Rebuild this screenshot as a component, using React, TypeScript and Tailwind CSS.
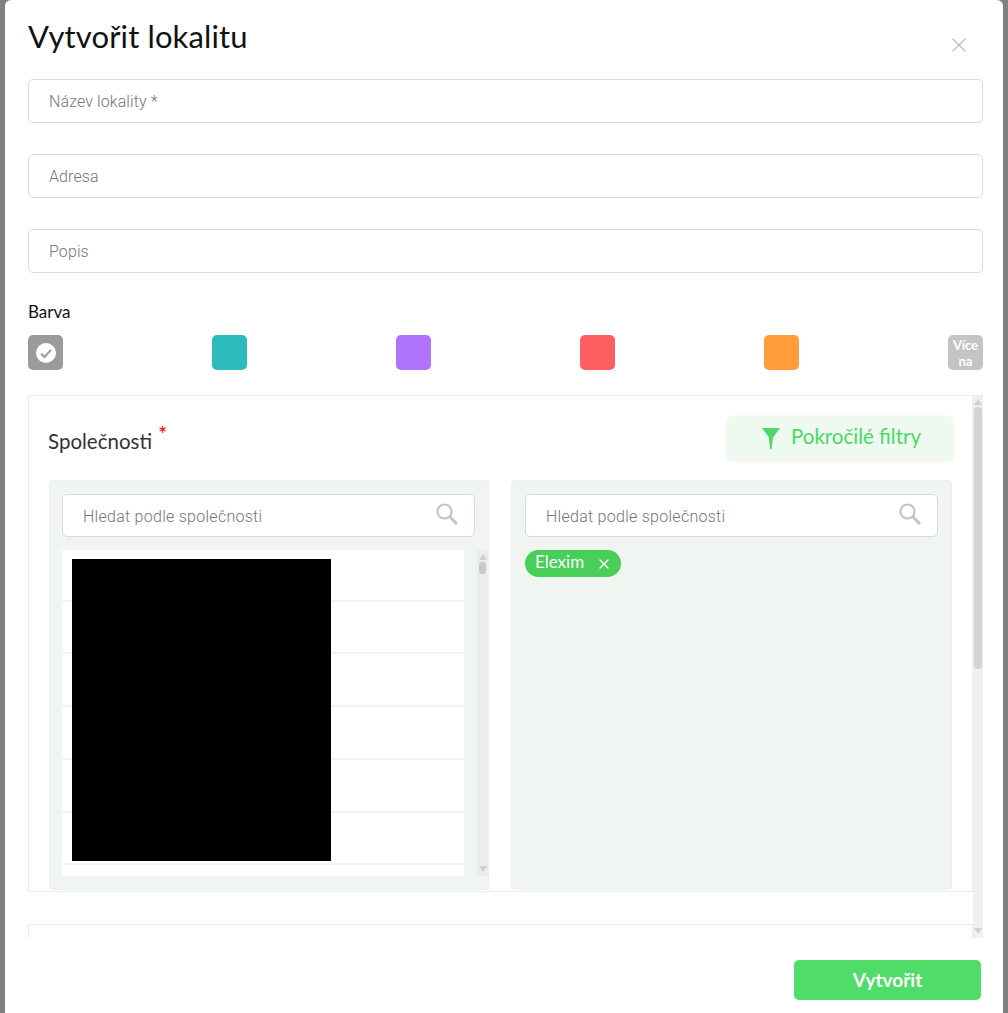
import React from "react";
import { X } from "lucide-react";

const display = "font-['Lato','Liberation_Sans',sans-serif]";
const body = "font-['Roboto','Liberation_Sans',sans-serif]";

function Field({ label }: { label: string }) {
  return (
    <div className={`h-[44px] w-full border border-[#dcdcdc] rounded-[5px] pl-5 pt-[1px] flex items-center text-[16px] tracking-[0.1px] font-light text-[#757575] ${body}`}>
      {label}
    </div>
  );
}

function SearchBox() {
  return (
    <div className={`h-[43px] bg-white border border-[#d5dcd7] rounded-[5px] pl-5 pr-[16px] pt-[2px] flex items-center justify-between text-[16px] tracking-[0.27px] font-light text-[#757575] ${body}`}>
      <span>Hledat podle společnosti</span>
      <svg width="22" height="22" viewBox="0 0 22 22" fill="none" stroke="#c4c4c4" className="-mt-[5px]">
        <circle cx="8.5" cy="8.5" r="7" strokeWidth="2.2" />
        <path d="M13.5 13.5L21 21" strokeWidth="3" />
      </svg>
    </div>
  );
}

function Arrow({ down }: { down?: boolean }) {
  return (
    <svg width="8" height="6" viewBox="0 0 8 6" className="shrink-0">
      <path d={down ? "M0 0H8L4 6Z" : "M4 0L8 6H0Z"} fill="#d0d0d0" />
    </svg>
  );
}

export default function App() {
  const swatches = ["bg-[#9b9b9b]", "bg-[#2cbcbc]", "bg-[#b074fc]", "bg-[#fd5f62]", "bg-[#ff9c3c]"];
  const rows = [50, 50, 51, 51, 51, 50, 11];

  return (
    <div className="h-[1013px] w-[1008px] overflow-hidden bg-[#808080] px-[5px]">
      <div className="h-full bg-white rounded-t-[6px] pl-[23px] pr-[20px]">
        <div className="flex justify-between pt-[18px] h-[79px]">
          <h1 className={`text-[31px] tracking-[0.13px] leading-[36px] text-[#111] ${display}`}>Vytvořit lokalitu</h1>
          <X className="w-[24px] h-[24px] mt-[15px] mr-[12px] text-[#bdbdbd]" strokeWidth={1.3} />
        </div>

        <div className="flex flex-col gap-[31px]">
          <Field label="Název lokality *" />
          <Field label="Adresa" />
          <Field label="Popis" />
        </div>

        <div className={`mt-[29px] text-[17px] leading-[20px] text-[#111] ${display}`}>Barva</div>
        <div className="mt-[13px] flex justify-between">
          {swatches.map((c, i) => (
            <div key={c} className={`w-[35px] h-[35px] rounded-[5px] flex items-center justify-center ${c}`}>
              {i === 0 && (
                <svg width="20" height="20" viewBox="0 0 20 20">
                  <circle cx="10" cy="10" r="10" fill="#fff" />
                  <path d="M5 10.5L8.5 14L15 6.8" fill="none" stroke="#9b9b9b" strokeWidth="2" />
                </svg>
              )}
            </div>
          ))}
          <div className={`w-[35px] h-[35px] rounded-[5px] bg-[#c4c4c4] text-white text-[13px] font-bold leading-[16px] text-center pt-[2px] ${display}`}>
            Více<br />na
          </div>
        </div>

        <div className="mt-[25px] h-[543px] flex overflow-hidden">
          <div className="w-[945px] shrink-0">
            <div className="h-[497px] border border-[#ececec] pt-[20px] pl-[20px] pr-[19px]">
              <div className="flex justify-between items-start h-[44px]">
                <div className={`mt-[8px] -ml-[1px] text-[20.5px] leading-[34px] text-[#333] flex ${display}`}>
                  Společnosti
                  <span className="text-[#f00] text-[22px] leading-[22px] ml-[6px] -mt-[1px]">*</span>
                </div>
                <button className={`w-[226px] h-[44px] bg-[#eefaf0] rounded-[5px] pb-[4px] shadow-[0_1px_4px_rgba(0,0,0,0.07)] flex items-center pl-[35px] gap-[11px] text-[#4bd866] text-[20.5px] ${display}`}>
                  <svg width="18" height="21" viewBox="0 0 18 21" className="mt-[4px]">
                    <path d="M0 0H18L11 9.5L9.5 21H8L7 9.5Z" fill="#4bd866" />
                  </svg>
                  Pokročilé filtry
                </button>
              </div>

              <div className="mt-[20px] flex gap-[22px] h-[410px]">
                <div className="w-[440px] bg-[#f0f5f1] border border-[#ebf0ec] rounded-l-[4px] pt-[13px] pl-[12px] flex flex-col">
                  <div className="w-[413px]"><SearchBox /></div>
                  <div className="mt-[13px] flex gap-[13px] h-[326px]">
                    <div className="w-[403px] relative flex flex-col gap-[2px] overflow-hidden">
                      {rows.map((h, i) => (
                        <div key={i} className="bg-white shrink-0" style={{ height: h }} />
                      ))}
                      <div className="absolute left-[10px] top-[9px] w-[259px] h-[302px] bg-black" />
                    </div>
                    <div className="w-[11px] bg-[#ececec] flex flex-col items-center py-[4px]">
                      <Arrow />
                      <div className="w-[7px] h-[12px] mt-[2px] rounded-[4px] bg-[#c8c8c8]" />
                      <div className="flex-1" />
                      <Arrow down />
                    </div>
                  </div>
                </div>
                <div className="w-[441px] bg-[#f0f5f1] border border-[#ebf0ec] rounded-[4px] pt-[13px] px-[13px]">
                  <SearchBox />
                  <div className={`mt-[13px] h-[27px] w-[96px] rounded-full bg-[#47cf5a] text-white text-[17px] pb-[3px] flex items-center pl-[10px] ${display}`}>
                    Elexim
                    <X className="w-[16px] h-[16px] ml-[12px] mt-[4px]" strokeWidth={2} />
                  </div>
                </div>
              </div>
            </div>
            <div className="mt-[32px] h-[14px] border-t border-x border-[#ececec]" />
          </div>
          <div className="w-[10px] bg-[#efefef] flex flex-col items-center py-[4px]">
            <Arrow />
            <div className="w-[8px] h-[262px] mt-[2px] rounded-[4px] bg-[#d4d4d4]" />
            <div className="flex-1" />
            <Arrow down />
          </div>
        </div>

        <div className="mt-[22px] flex justify-end pr-[2px]">
          <button className={`w-[187px] h-[40px] rounded-[5px] bg-[#4fdc68] text-white text-[19px] font-bold ${display}`}>
            Vytvořit
          </button>
        </div>
      </div>
    </div>
  );
}
